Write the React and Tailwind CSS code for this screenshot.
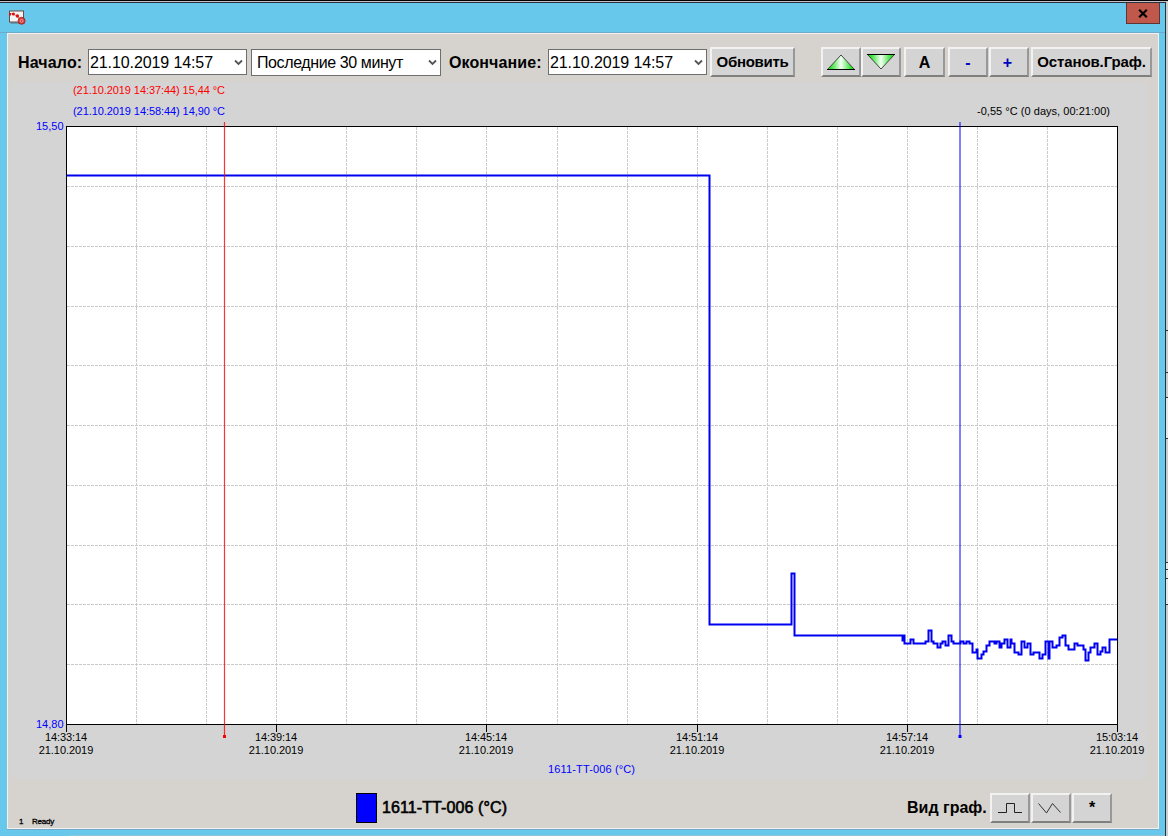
import clsx from "clsx";

const TRACE =
  "M67 175.5H709.5V624.5H791.5V573.5H794.5V635.5H902.5V640.5H903.5V635.5H904.5V643.5H910.5V639.5H913.5V643.5" +
  "H925.5V641.5H928.5V630.5H931.5V641.5H933.5V643.5H937.5V647.5H940.5V643.5H942.5V641.5H945.5V645.5H948.5V635.5H951.5V641.5H953.5V643.5" +
  "H960.5V641.5H963.5V643.5H966.5V641.5H969.5V643.5H972.5V652.5H976.5V649.5H977.5V658.5H981.5V654.5H983.5V651.5H986.5V645.5H989.5V641.5" +
  "H994.5V643.5H996.5V641.5H999.5V647.5H1001.5V643.5H1004.5V639.5H1007.5V647.5H1010.5V639.5H1011.5V643.5H1014.5V652.5H1018.5V654.5" +
  "H1021.5V641.5H1024.5V647.5H1027.5V643.5H1030.5V654.5H1033.5V652.5H1039.5V658.5H1042.5V654.5H1045.5V641.5H1048.5V658.5H1049.5V641.5" +
  "H1052.5V647.5H1056.5V645.5H1059.5V637.5H1062.5V635.5H1065.5V645.5H1068.5V649.5H1074.5V643.5H1077.5V645.5H1083.5V649.5H1085.5V660.5" +
  "H1088.5V652.5H1090.5V647.5H1094.5V643.5H1097.5V654.5H1100.5V651.5H1102.5V647.5H1105.5V652.5H1109.5V639.5H1117";

const GRID_X = [136, 206, 276, 346, 416, 486, 557, 627, 697, 767, 837, 907, 977, 1047];
const GRID_Y = [186, 246, 306, 365, 425, 485, 545, 604, 664];

const TIME_LABELS = [
  { x: 66, time: "14:33:14" },
  { x: 276, time: "14:39:14" },
  { x: 486, time: "14:45:14" },
  { x: 697, time: "14:51:14" },
  { x: 907, time: "14:57:14" },
  { x: 1117, time: "15:03:14" },
];

// marks of the window behind, visible along the right edge
const EDGE_MARKS = [330, 372, 397, 438, 562, 569, 578, 604];

function Combo({ value, className }) {
  return (
    <div
      className={clsx(
        "flex shrink-0 items-center justify-between border border-[#6e6e6e] bg-white pr-[3px] text-base whitespace-nowrap",
        className
      )}
    >
      <span>{value}</span>
      <svg width="9" height="7" viewBox="0 0 9 7" fill="none">
        <path d="M1 1.5L4.5 5L8 1.5" stroke="#555" strokeWidth="1.8" />
      </svg>
    </div>
  );
}

function ToolButton({ className, children }) {
  return (
    <button
      className={clsx(
        "flex h-[30px] shrink-0 items-center justify-center border-2 border-t-[#f2f2f2] border-r-[#989898] border-b-[#808080] border-l-[#f2f2f2] bg-[#d4d4d4] font-bold whitespace-nowrap",
        className
      )}
    >
      {children}
    </button>
  );
}

function TitleBar() {
  return (
    <div className="flex h-[29px] shrink-0 items-start justify-between pr-[5px] pl-[9px]">
      <svg className="mt-[7px]" width="17" height="15" viewBox="0 0 17 15">
        <path d="M1.5 13H14" stroke="#5b6f78" />
        <rect x="0.5" y="1" width="14" height="11" fill="#f4f4f4" stroke="#6b4a4a" />
        <path d="M1 4L4 3.5L8 6.5L11 9" fill="none" stroke="#e08080" />
        <rect x="0" y="3" width="2" height="2.5" fill="#e01010" />
        <circle cx="4.4" cy="4" r="1.6" fill="#e01010" />
        <circle cx="8.4" cy="6" r="1.7" fill="#e01010" />
        <circle cx="12.6" cy="10.8" r="3.5" fill="#d83838" stroke="#a02020" strokeWidth="0.8" />
        <circle cx="12.6" cy="10.8" r="1.5" fill="none" stroke="#f4b0b0" strokeWidth="0.8" />
      </svg>
      <button className="flex h-[21px] w-[34px] items-center justify-center border border-t-0 border-[#5e3434] bg-[#c0594c]">
        <svg width="10" height="9" viewBox="0 0 10 9">
          <path d="M1.2 0.8L8.8 8.2M8.8 0.8L1.2 8.2" stroke="#000" strokeWidth="2.2" />
        </svg>
      </button>
    </div>
  );
}

function Toolbar() {
  return (
    <div className="flex h-[48px] shrink-0 items-start pt-[13px] pl-[10px]">
      <span className="mt-[4px] w-[70px] shrink-0 text-base leading-6 font-bold tracking-[0.15px]">
        Начало:
      </span>
      <Combo value="21.10.2019 14:57" className="mt-[2px] h-[26px] w-[159px] pt-px pl-px tracking-[-0.1px]" />
      <Combo
        value="Последние 30 минут"
        className="mt-[2px] ml-[4px] h-[27px] w-[190px] pl-[5px] tracking-[-0.4px]"
      />
      <span className="mt-[4px] ml-[8px] w-[99px] shrink-0 text-base leading-6 font-bold tracking-[0.1px]">
        Окончание:
      </span>
      <Combo value="21.10.2019 14:57" className="mt-[2px] h-[26px] w-[159px] pt-px pl-px tracking-[-0.1px]" />
      <ToolButton className="ml-[3px] w-[85px] pt-px text-[15px] tracking-[-0.3px]">Обновить</ToolButton>
      <ToolButton className="ml-[26px] w-[40px]">
        <svg width="28" height="17" viewBox="0 0 28 17">
          <defs>
            <linearGradient id="green">
              <stop offset="0.1" stopColor="#20e020" />
              <stop offset="0.5" stopColor="#f4fff4" />
              <stop offset="0.9" stopColor="#20e020" />
            </linearGradient>
          </defs>
          <path d="M0.5 15.5L14 1L27.5 15.5Z" fill="url(#green)" stroke="#444" />
          <path d="M0 15.5H28" stroke="#000" />
        </svg>
      </ToolButton>
      <ToolButton className="w-[40px]">
        <svg className="-mt-[2px]" width="28" height="17" viewBox="0 0 28 17">
          <path d="M0.5 1.5L14 16L27.5 1.5Z" fill="url(#green)" stroke="#444" />
          <path d="M0 1.5H28" stroke="#000" />
        </svg>
      </ToolButton>
      <ToolButton className="ml-[3px] w-[41px] pt-px text-base">А</ToolButton>
      <ToolButton className="ml-[3px] w-[40px] pt-px text-base text-[#0000c0]">-</ToolButton>
      <ToolButton className="ml-[1px] w-[40px] pt-px pr-[3px] text-base text-[#0000c0]">+</ToolButton>
      <ToolButton className="ml-[2px] w-[121px] pt-px text-[15px] tracking-[-0.1px]">
        Останов.Граф.
      </ToolButton>
    </div>
  );
}

function Chart() {
  return (
    <svg
      className="ml-[4px] shrink-0 bg-[#d4d4d4] text-[11px]"
      width="1135"
      height="697"
      viewBox="12 82 1135 697"
    >
      <rect x="66" y="126" width="1052" height="599" fill="#fff" />
      <g stroke="#cacaca" strokeDasharray="3 1" shapeRendering="crispEdges">
        {GRID_X.map((x) => (
          <path key={x} d={`M${x + 0.5} 127V724`} />
        ))}
        {GRID_Y.map((y) => (
          <path key={y} d={`M67 ${y + 0.5}H1117`} />
        ))}
      </g>
      <rect x="66.5" y="126.5" width="1051" height="598" fill="none" stroke="#000" />
      {TIME_LABELS.map(({ x, time }) => (
        <g key={time}>
          <path d={`M${x + 0.5} 725V732`} stroke="#000" />
          <text x={x} y="741" textAnchor="middle" textLength="42">{time}</text>
          <text x={x} y="754" textAnchor="middle" textLength="54.5">21.10.2019</text>
        </g>
      ))}

      <path d={TRACE} fill="none" stroke="#0000f0" strokeWidth="2" />

      <path d="M224.5 122V736" stroke="#ff0000" strokeOpacity="0.8" strokeWidth="1.2" />
      <rect x="223" y="735" width="3" height="3" fill="#ff0000" />
      <path d="M960 122V736" stroke="#0000ff" />
      <rect x="958.5" y="735" width="3" height="3" fill="#0000ff" />

      <text x="73" y="94" fill="#ff0000" textLength="152">(21.10.2019 14:37:44) 15,44 °C</text>
      <text x="73" y="115" fill="#0000ff" textLength="152">(21.10.2019 14:58:44) 14,90 °C</text>
      <text x="977" y="115" textLength="133">-0,55 °C (0 days, 00:21:00)</text>
      <text x="63.5" y="130" fill="#0000ff" textAnchor="end">15,50</text>
      <text x="63.5" y="728" fill="#0000ff" textAnchor="end">14,80</text>
      <text x="548" y="773" fill="#0000ff" textLength="87">1611-TT-006 (°C)</text>
    </svg>
  );
}

function Footer() {
  return (
    <div className="flex grow items-start pt-[14px] pl-[11px]">
      <div className="mt-[23px] flex w-[337px] text-[8px] leading-3 tracking-[-0.2px] [-webkit-text-stroke:0.3px_#000]">
        <span className="w-[13px]">1</span>
        <span>Ready</span>
      </div>
      <div className="h-[30px] w-[21px] border border-black bg-[#0000ff]" />
      <span className="ml-[5px] w-[525px] text-base leading-[30px] tracking-[0.1px] [-webkit-text-stroke:0.6px_#000]">
        1611-TT-006 (°C)
      </span>
      <span className="w-[83px] shrink-0 text-base leading-[30px] font-bold whitespace-nowrap">
        Вид граф.
      </span>
      <ToolButton className="w-[40px]">
        <svg width="24" height="10" viewBox="0 0 24 10" fill="none" stroke="#222">
          <path d="M0 9.5H8.5V0.5H16.5V9.5H24" />
        </svg>
      </ToolButton>
      <ToolButton className="ml-[1px] w-[40px] pr-[4px]">
        <svg width="23" height="11" viewBox="0 0 23 11" fill="none" stroke="#333">
          <path d="M0.5 0.5L8.5 10L14.5 0.5L22.5 9.5" />
        </svg>
      </ToolButton>
      <ToolButton className="ml-[1px] w-[40px] text-base">*</ToolButton>
    </div>
  );
}

export default function App() {
  return (
    <div className="flex h-[836px] w-[1168px] flex-col overflow-hidden bg-[#67c8eb] font-['Liberation_Sans',Arial,sans-serif] text-black">
      <div className="h-px shrink-0 bg-black" />
      <div className="h-px shrink-0 bg-[#c8c0c8]" />
      <div className="flex grow">
        <div className="flex w-[1165px] shrink-0 flex-col border-t border-[#28303c]">
          <TitleBar />
          <div className="h-px shrink-0 bg-[#6fa9cc]" />
          <div className="ml-[7px] flex h-[796px] w-[1152px] shrink-0 flex-col border border-[#f4f2ee] bg-[#d6d3ce]">
            <Toolbar />
            <Chart />
            <Footer />
          </div>
          <div className="ml-[7px] h-px w-[1152px] shrink-0 bg-[#6fa9cc]" />
          <div className="mt-[5px] ml-[70px] h-px shrink-0 bg-[#8fc4d8]" />
        </div>
        <div className="w-px shrink-0 bg-[#183848]" />
        <svg className="shrink-0 bg-[#cdcdcd]" width="2" height="834" viewBox="0 2 2 834">
          <rect y="397" width="2" height="41" fill="#e6e6e6" />
          <rect y="562" width="2" height="42" fill="#e6e6e6" />
          {EDGE_MARKS.map((y) => (
            <rect key={y} y={y} width="2" height="1" fill="#333" />
          ))}
        </svg>
      </div>
    </div>
  );
}
